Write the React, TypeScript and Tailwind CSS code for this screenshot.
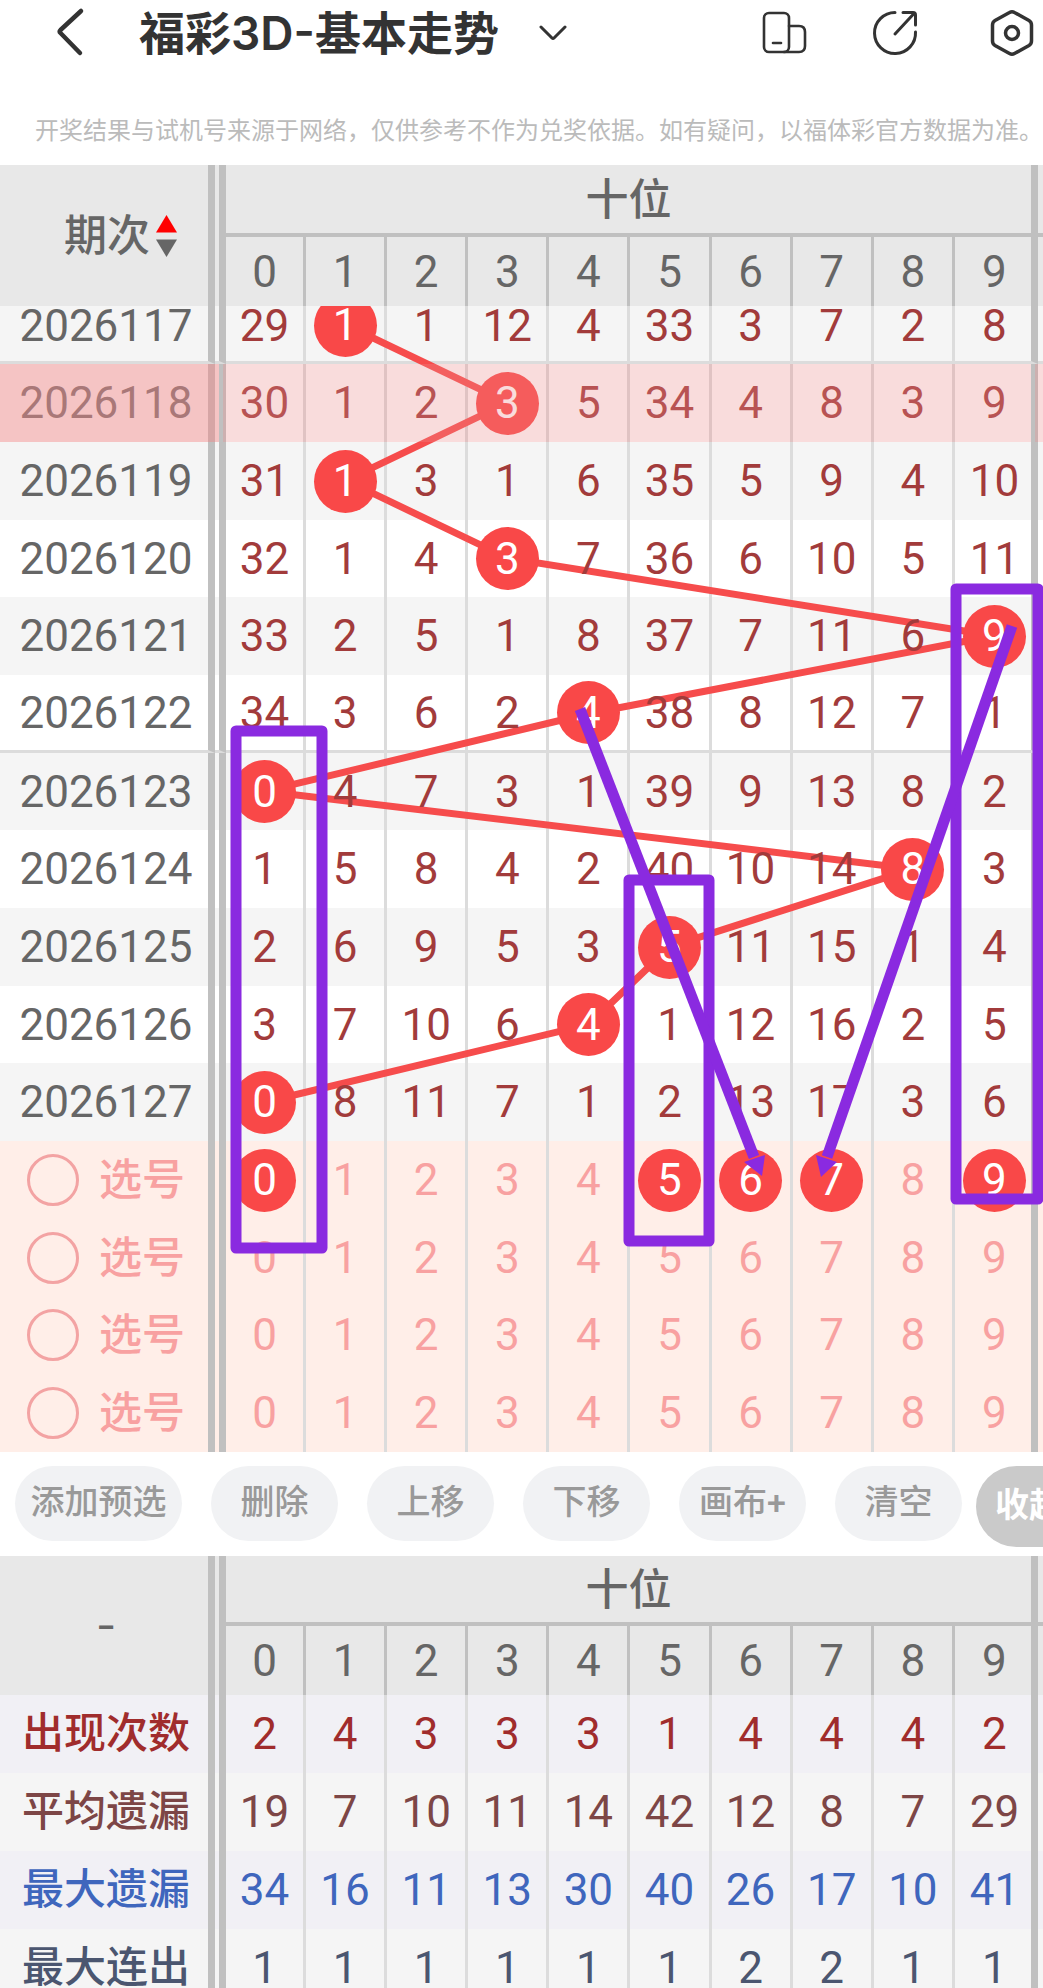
import React, { useState } from "react";

const DIGITS = [0, 1, 2, 3, 4, 5, 6, 7, 8, 9];

type Draw = { issue: string; cells: number[]; hit: number };

const DRAWS: Draw[] = [
  { issue: "2026117", cells: [29, 1, 1, 12, 4, 33, 3, 7, 2, 8], hit: 1 },
  { issue: "2026118", cells: [30, 1, 2, 3, 5, 34, 4, 8, 3, 9], hit: 3 },
  { issue: "2026119", cells: [31, 1, 3, 1, 6, 35, 5, 9, 4, 10], hit: 1 },
  { issue: "2026120", cells: [32, 1, 4, 3, 7, 36, 6, 10, 5, 11], hit: 3 },
  { issue: "2026121", cells: [33, 2, 5, 1, 8, 37, 7, 11, 6, 9], hit: 9 },
  { issue: "2026122", cells: [34, 3, 6, 2, 4, 38, 8, 12, 7, 1], hit: 4 },
  { issue: "2026123", cells: [0, 4, 7, 3, 1, 39, 9, 13, 8, 2], hit: 0 },
  { issue: "2026124", cells: [1, 5, 8, 4, 2, 40, 10, 14, 8, 3], hit: 8 },
  { issue: "2026125", cells: [2, 6, 9, 5, 3, 5, 11, 15, 1, 4], hit: 5 },
  { issue: "2026126", cells: [3, 7, 10, 6, 4, 1, 12, 16, 2, 5], hit: 4 },
  { issue: "2026127", cells: [0, 8, 11, 7, 1, 2, 13, 17, 3, 6], hit: 0 },
];

const STATS = [
  { name: "出现次数", values: [2, 4, 3, 3, 3, 1, 4, 4, 4, 2], row: "bg-[#f1f0f5] text-[#a02c2c]" },
  { name: "平均遗漏", values: [19, 7, 10, 11, 14, 42, 12, 8, 7, 29], row: "bg-[#f5f5f5] text-[#7d4646]" },
  { name: "最大遗漏", values: [34, 16, 11, 13, 30, 40, 26, 17, 10, 41], row: "bg-[#f1f0f5] text-[#3f66bd]" },
  { name: "最大连出", values: [1, 1, 1, 1, 1, 1, 2, 2, 1, 1], row: "bg-[#f5f5f5] text-[#4b5670]" },
];

const HIGHLIGHTED = 1;
const GROUP_ENDS = [0, 5];

// Geometry of the drawing layer, in the units of its view box.
const LAYER_W = 812;
const LAYER_H = 1287;
const colX = (c: number) => 39 + c * 81;
const rowY = (r: number) => 160 + (r * 777) / 10;

function Columns() {
  return (
    <colgroup>
      <col className="w-[215px]" />
      <col className="w-[11px]" />
      <col className="w-[80px]" />
      {DIGITS.slice(1, 9).map((d) => (
        <col key={d} />
      ))}
      <col className="w-[83px]" />
      <col className="w-[5px]" />
    </colgroup>
  );
}

function TableHead({ label, top }: { label: React.ReactNode; top: string }) {
  return (
    <thead className="bg-[#e8e8e8] text-[#666]">
      <tr>
        <th scope="col" rowSpan={2} className="border-r-7 border-[#c0c0c0] p-0 pl-1 font-normal">
          {label}
        </th>
        <td rowSpan={2} className="border-r-7 border-[#c0c0c0] p-0" />
        <th scope="colgroup" colSpan={10} className={`${top} border-r-7 border-b-4 border-[#c0c0c0] p-0 pt-0.5 text-[43px] font-medium`}>
          十位
        </th>
        <td className="border-b-4 border-[#c0c0c0] p-0" />
      </tr>
      <tr>
        {DIGITS.map((d) => (
          <th key={d} scope="col" className={`h-[69px] border-[#c0c0c0] p-0 font-normal ${d === 9 ? "border-r-7 pl-[3px]" : "border-r-3"}`}>
            {d}
          </th>
        ))}
        <td className="p-0" />
      </tr>
    </thead>
  );
}

function Ball({ value }: { value: number }) {
  return (
    <span className="relative z-10 mx-auto flex size-[63px] items-center justify-center rounded-full bg-[#f94848] text-white">
      {value}
    </span>
  );
}

function edge(c: number) {
  return c === 9 ? "border-r-7 border-r-[#c0c0c0] pl-[3px]" : "border-r-3 border-r-[#dcdcdc]";
}

function DrawRow({ draw, index }: { draw: Draw; index: number }) {
  const clipped = index === 0;
  const lit = index === HIGHLIGHTED;
  const bottom = GROUP_ENDS.includes(index) ? "border-b-3 border-b-[#dcdcdc]" : "";
  const height = clipped ? "h-[58px]" : index % 3 === 0 ? "h-[77px]" : "h-[78px]";
  const align = clipped ? "align-top" : "align-middle";
  const strong = lit ? "relative after:absolute after:inset-y-0 after:left-0 after:-right-[7px] after:z-20 after:bg-[#eb8a8a]/50" : "";
  const gap = lit ? "relative after:absolute after:inset-y-0 after:left-0 after:right-0 after:z-20 after:bg-[#eb8a8a]/50" : "";
  const soft = lit
    ? "relative after:absolute after:inset-y-0 after:-left-[3px] after:right-0 after:z-20 after:bg-[#eb8a8a]/30"
    : "";
  const ball = (v: number) =>
    clipped ? (
      <div className="flex h-[55px] items-end justify-center overflow-hidden">
        <div className="flex h-[72px] shrink-0 items-center">
          <Ball value={v} />
        </div>
      </div>
    ) : (
      <Ball value={v} />
    );
  return (
    <tr className={index % 2 === 0 ? "bg-[#f5f5f5]" : "bg-white"}>
      <th
        scope="row"
        className={`${height} ${bottom} ${align} ${strong} border-r-7 border-r-[#c0c0c0] p-0 pl-1 font-normal text-[#666]`}
      >
        {draw.issue}
      </th>
      <td className={`${bottom} ${gap} border-r-7 border-r-[#c0c0c0] p-0`} />
      {draw.cells.map((v, c) => (
        <td key={c} className={`${bottom} ${align} ${soft} ${edge(c)} p-0 text-center text-[#a23b3b]`}>
          {c === draw.hit ? ball(v) : <span className="relative z-10">{v}</span>}
        </td>
      ))}
      <td className={`${bottom} ${soft} p-0`} />
    </tr>
  );
}

function PickRow({ index }: { index: number }) {
  const [picked, setPicked] = useState<number[]>(index === 0 ? [0, 5, 6, 7, 9] : []);
  const toggle = (d: number) => setPicked(picked.includes(d) ? picked.filter((p) => p !== d) : [...picked, d]);
  return (
    <tr className="bg-[#ffeee8] text-[#f8a1a1]">
      <th scope="row" className={`${index === 1 ? "h-[77px]" : "h-[78px]"} border-r-7 border-[#c0c0c0] p-0 font-medium`}>
        <label className="flex items-center gap-5 pl-[27px] text-[43px]">
          <input type="radio" name="pick" className="size-[52px] appearance-none rounded-full border-3 border-[#f3a3a3] checked:bg-[#f3a3a3]" />
          <span>选号</span>
        </label>
      </th>
      <td className="border-r-7 border-[#c0c0c0] p-0" />
      {DIGITS.map((d) => (
        <td key={d} className={`${edge(d)} p-0`}>
          <button
            type="button"
            aria-pressed={picked.includes(d)}
            onClick={() => toggle(d)}
            className="flex w-full items-center justify-center"
          >
            {picked.includes(d) ? <Ball value={d} /> : d}
          </button>
        </td>
      ))}
      <td className="p-0" />
    </tr>
  );
}

const LAYER = "pointer-events-none absolute inset-y-0 left-[226px] h-full w-[calc(100%-231px)] overflow-visible";

function TrendLines() {
  const points = DRAWS.map((d, i) => `${colX(d.hit)},${rowY(i)}`).join(" ");
  return (
    <svg aria-hidden="true" className={LAYER} viewBox={`0 0 ${LAYER_W} ${LAYER_H}`} preserveAspectRatio="none">
      <polyline points={points} fill="none" stroke="#f64c4c" strokeWidth="7" strokeLinejoin="round" />
    </svg>
  );
}

function Annotations() {
  return (
    <svg aria-hidden="true" className={`${LAYER} z-30`} viewBox={`0 0 ${LAYER_W} ${LAYER_H}`} preserveAspectRatio="none">
      <g fill="none" stroke="#8a2ae0" strokeWidth="11" strokeLinejoin="round">
        <rect x="10" y="566" width="86" height="517" />
        <rect x="403" y="715" width="80" height="361" />
        <rect x="730" y="424" width="82" height="610" />
        <path d="M354 544 L528 992" />
        <path d="M786 461 L601 992" />
      </g>
      <g fill="#8a2ae0">
        <path d="M518 997 L539 990 L536 1011 Z" />
        <path d="M590 990 L611 997 L595 1012 Z" />
      </g>
    </svg>
  );
}

function TopBar() {
  return (
    <header className="flex h-16 items-center pt-0.5 pr-[7px] pl-[54px] text-[#333]">
      <button type="button" aria-label="返回" className="-mt-0.5">
        <svg className="h-[52px] w-8" viewBox="0 0 32 52" fill="none" stroke="currentColor" strokeWidth="4.5" strokeLinecap="round" strokeLinejoin="round">
          <path d="M27 5 L6.500 24 Q5 25.500 6.500 27 L26 47" />
        </svg>
      </button>
      <button type="button" className="ml-[53px] flex items-center gap-10">
        <h1 className="text-[46px] leading-none font-semibold whitespace-nowrap">福彩3D-基本走势</h1>
        <svg className="h-4 w-7" viewBox="0 0 28 16" fill="none" stroke="currentColor" strokeWidth="3" strokeLinecap="round" strokeLinejoin="round">
          <path d="M2 2 L13 13 Q14 14 15 13 L26 2" />
        </svg>
      </button>
      <div className="ml-auto flex items-center gap-[64px]">
        <button type="button" aria-label="横竖屏">
          <svg className="size-12" viewBox="0 0 48 48" fill="none" stroke="currentColor" strokeWidth="2.600" strokeLinecap="round" strokeLinejoin="round">
            <rect x="4" y="4" width="25" height="39" rx="5" />
            <path d="M29 17 H39 Q45 17 45 23 V37 Q45 43 39 43 H24" />
            <path d="M13 34 H21" />
          </svg>
        </button>
        <button type="button" aria-label="分享">
          <svg className="size-12" viewBox="0 0 48 48" fill="none" stroke="currentColor" strokeWidth="3" strokeLinecap="round" strokeLinejoin="round">
            <path d="M23 3.500 A20.500 20.500 0 1 0 43.500 23" />
            <path d="M23 25 L42 4.500" />
            <path d="M31 3.500 H41 Q43.500 3.500 43.500 6 V16" />
          </svg>
        </button>
        <button type="button" aria-label="设置" className="ml-1">
          <svg className="size-12" viewBox="0 0 48 48" fill="none" stroke="currentColor" strokeWidth="3.500" strokeLinejoin="round">
            <path d="M21.500 3.500 Q24 2 26.500 3.500 L41 11.500 Q43.500 13 43.500 16 V32 Q43.500 35 41 36.500 L26.500 44.500 Q24 46 21.500 44.500 L7 36.500 Q4.500 35 4.500 32 V16 Q4.500 13 7 11.500 Z" />
            <circle cx="24" cy="24" r="6.500" />
          </svg>
        </button>
      </div>
    </header>
  );
}

const ACTIONS = ["删除", "上移", "下移", "画布+", "清空"];

function ActionBar() {
  return (
    <div className="flex h-[104px] shrink-0 items-start overflow-hidden bg-white pt-[14px] pl-[15px] text-[34px] leading-none whitespace-nowrap text-[#999]">
      <div className="flex shrink-0 gap-[29px]">
        <button type="button" className="h-[75px] w-[167px] rounded-full bg-[#f1f2f4] pb-1 font-medium">
          添加预选
        </button>
        {ACTIONS.map((a) => (
          <button key={a} type="button" className="h-[75px] w-[127px] rounded-full bg-[#f1f2f4] pb-1 font-medium">
            {a}
          </button>
        ))}
      </div>
      <button type="button" className="ml-[14px] h-[81px] shrink-0 rounded-l-full bg-[#cacaca] px-[19px] pb-1 font-bold text-white">
        收起
      </button>
    </div>
  );
}

export default function App() {
  const tableClass = "w-full table-fixed border-separate border-spacing-0 text-[44px] leading-10";
  return (
    <main className="flex h-screen flex-col overflow-hidden bg-white font-[Roboto,'Noto_Sans_CJK_SC',sans-serif]">
      <div className="shrink-0 font-[Inter,'Noto_Sans_CJK_SC',sans-serif]">
        <TopBar />
      </div>
      <p className="shrink-0 overflow-hidden pt-[47px] pb-[18px] pl-[35px] font-['Noto_Sans_CJK_SC',sans-serif] text-[24px] leading-9 whitespace-nowrap text-[#bbb]">
        开奖结果与试机号来源于网络，仅供参考不作为兑奖依据。如有疑问，以福体彩官方数据为准。
      </p>
      <section className="relative isolate shrink-0 overflow-hidden">
        <table className={tableClass}>
          <Columns />
          <TableHead
            top="h-[72px]"
            label={
              <button type="button" className="flex items-center gap-[6px] pl-[60px] text-[43px] font-medium whitespace-nowrap">
                期次
                <svg className="h-[42px] w-[21px]" viewBox="0 0 21 42" aria-hidden="true">
                  <path d="M10.500 0 L21 17.500 H0 Z" fill="#f00" />
                  <path d="M0 24.500 H21 L10.500 42 Z" fill="#666" />
                </svg>
              </button>
            }
          />
          <tbody>
            {DRAWS.map((d, i) => (
              <DrawRow key={d.issue} draw={d} index={i} />
            ))}
            {[0, 1, 2, 3].map((i) => (
              <PickRow key={i} index={i} />
            ))}
          </tbody>
        </table>
        <TrendLines />
        <Annotations />
      </section>
      <ActionBar />
      <section className="shrink-0">
        <table className={tableClass}>
          <Columns />
          <TableHead top="h-[70px]" label={<span className="font-[Inter,sans-serif]">-</span>} />
          <tbody>
            {STATS.map((s) => (
              <tr key={s.name} className={s.row}>
                <th scope="row" className="h-[78px] border-r-7 border-[#c0c0c0] p-0 pl-1 text-[42px] font-medium whitespace-nowrap">
                  {s.name}
                </th>
                <td className="border-r-7 border-[#c0c0c0] p-0" />
                {s.values.map((v, c) => (
                  <td key={c} className={`${edge(c)} p-0 text-center`}>
                    {v}
                  </td>
                ))}
                <td className="p-0" />
              </tr>
            ))}
          </tbody>
        </table>
      </section>
    </main>
  );
}
